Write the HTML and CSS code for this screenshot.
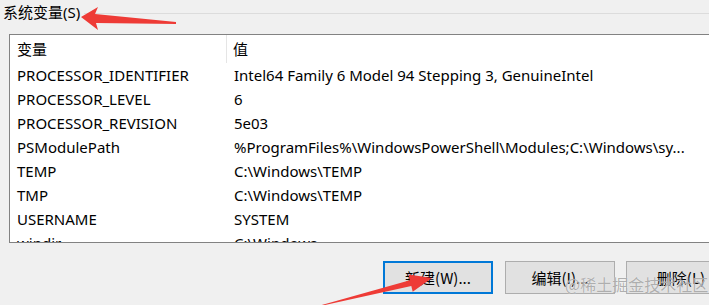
FILE: index.html
```html
<!DOCTYPE html>
<html>
<head>
<meta charset="utf-8">
<link rel="stylesheet" href="styles.css">
</head>
<body>
<div class="page">
  <div class="group-head">
    <span class="group-label">系统变量(S)</span>
    <span class="group-line"></span>
  </div>
  <div class="listbox">
    <div class="row head">
      <div class="c1">变量</div>
      <div class="c2">值</div>
    </div>
    <div class="row"><div class="c1">PROCESSOR_IDENTIFIER</div><div class="c2">Intel64 Family 6 Model 94 Stepping 3, GenuineIntel</div></div>
    <div class="row"><div class="c1">PROCESSOR_LEVEL</div><div class="c2">6</div></div>
    <div class="row"><div class="c1">PROCESSOR_REVISION</div><div class="c2">5e03</div></div>
    <div class="row"><div class="c1">PSModulePath</div><div class="c2">%ProgramFiles%\WindowsPowerShell\Modules;C:\Windows\sy...</div></div>
    <div class="row"><div class="c1">TEMP</div><div class="c2">C:\Windows\TEMP</div></div>
    <div class="row"><div class="c1">TMP</div><div class="c2">C:\Windows\TEMP</div></div>
    <div class="row"><div class="c1">USERNAME</div><div class="c2">SYSTEM</div></div>
    <div class="row"><div class="c1">windir</div><div class="c2">C:\Windows</div></div>
  </div>
  <div class="buttons">
    <button class="btn primary">新建(W)...</button>
    <button class="btn">编辑(I)...</button>
    <button class="btn">删除(L)</button>
  </div>

  <svg class="arrow arrow-top" width="110" height="30" viewBox="0 0 110 30">
    <polygon points="3,12 20,2 17,9 98,17 98,19 18,18 20,25" fill="#ee3b36"/>
  </svg>
  <svg class="arrow arrow-bottom" width="130" height="45" viewBox="0 0 130 45">
    <polygon points="10,45.5 99.9,20.2 98.5,14.4 122,18 102.7,31.8 101.3,26 10.5,46" fill="#ee3b36"/>
  </svg>
  <div class="watermark">@稀土掘金技术社区</div>
</div>
</body>
</html>
```
FILE: styles.css
```css
html, body {
  margin: 0;
  padding: 0;
}
body {
  background: #f0f0f0;
  width: 709px;
  height: 305px;
  overflow: hidden;
  font-family: "Noto Sans", "Noto Sans CJK SC", sans-serif;
  font-size: 15px;
  color: #000;
}
.page {
  position: relative;
  width: 709px;
  height: 305px;
  overflow: hidden;
}
.group-head {
  display: flex;
  align-items: flex-start;
  height: 34px;
}
.group-label {
  padding-left: 3px;
  padding-top: 2px;
  font-size: 15px;
  line-height: 20px;
  white-space: nowrap;
}
.group-line {
  flex: 1;
  height: 1px;
  margin-top: 13px;
  margin-left: 4px;
  background: #dcdcdc;
}
.listbox {
  margin-left: 9px;
  width: 760px;
  height: 207px;
  border: 1px solid #828282;
  background: #fff;
  overflow: hidden;
}
.row {
  display: flex;
  height: 24px;
  line-height: 24px;
  white-space: nowrap;
}
.row.head {
  height: 28px;
  line-height: 28px;
}
.c1 {
  width: 210px;
  padding-left: 7px;
  flex: none;
}
.c2 {
  padding-left: 7px;
}
.row.head .c1 {
  border-right: 1px solid #e5e5e5;
  width: 209px;
}
.row.head .c2 {
  padding-left: 6px;
}
.buttons {
  display: flex;
  margin-top: 18px;
  padding-left: 383px;
}
.btn {
  flex: none;
  width: 110px;
  height: 33px;
  margin-right: 11px;
  border: 1px solid #adadad;
  background: #e1e1e1;
  font-family: "Noto Sans CJK SC", "Noto Sans", sans-serif;
  font-size: 15px;
  color: #000;
  padding: 0;
}
.btn.primary {
  border: 2px solid #0078d7;
  margin-right: 12px;
}
.arrow {
  position: absolute;
}
.arrow-top {
  left: 78px;
  top: 5px;
}
.arrow-bottom {
  left: 310px;
  top: 260px;
}
.watermark {
  position: absolute;
  left: 565px;
  top: 272px;
  font-family: "Noto Sans CJK SC", sans-serif;
  font-size: 16px;
  color: rgba(150, 150, 150, 0.75);
  text-shadow: 0 0 1px rgba(255, 255, 255, 0.9);
  white-space: nowrap;
}
```
